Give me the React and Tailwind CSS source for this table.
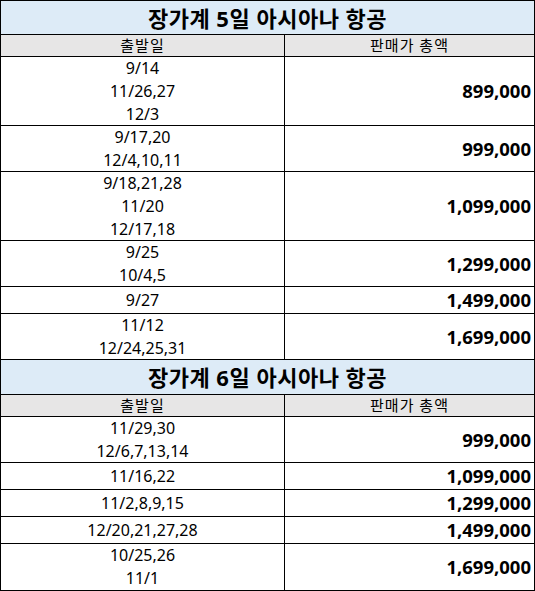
import React from 'react';

const sections = [
  {
    title: '장가계 5일 아시아나 항공',
    rows: [
      { h: 'h-[69px]', dates: ['9/14', '11/26,27', '12/3'], price: '899,000' },
      { h: 'h-[46px]', dates: ['9/17,20', '12/4,10,11'], price: '999,000' },
      { h: 'h-[69px]', dates: ['9/18,21,28', '11/20', '12/17,18'], price: '1,099,000' },
      { h: 'h-[46px]', dates: ['9/25', '10/4,5'], price: '1,299,000' },
      { h: 'h-[27px]', dates: ['9/27'], price: '1,499,000' },
      { h: 'h-[46px]', dates: ['11/12', '12/24,25,31'], price: '1,699,000' },
    ],
  },
  {
    title: '장가계 6일 아시아나 항공',
    rows: [
      { h: 'h-[46px]', dates: ['11/29,30', '12/6,7,13,14'], price: '999,000' },
      { h: 'h-[27px]', dates: ['11/16,22'], price: '1,099,000' },
      { h: 'h-[27px]', dates: ['11/2,8,9,15'], price: '1,299,000' },
      { h: 'h-[27px]', dates: ['12/20,21,27,28'], price: '1,499,000' },
      { h: 'h-[46px]', dates: ['10/25,26', '11/1'], price: '1,699,000' },
    ],
  },
];

export default function App() {
  return (
    <div className="w-[535px] h-[591px] bg-white font-['Noto_Sans','Noto_Sans_CJK_KR',sans-serif] text-black">
      <div className="border border-black">
        {sections.map((s, si) => (
          <div key={si}>
            {/* title row */}
            <div className={`${si === 0 ? 'h-[34px]' : 'h-[35px]'} bg-[#ddebf7] border-b border-black flex items-center justify-center`}>
              <span className="text-[22px] font-bold leading-none tracking-[0.5px]">{s.title}</span>
            </div>
            {/* header */}
            <div className="h-[22px] bg-[#e7e6e6] border-b border-black flex text-[15px] tracking-[1px]">
              <div className="w-[284px] border-r border-black flex items-center justify-center">출발일</div>
              <div className="flex-1 flex items-center justify-center">판매가 총액</div>
            </div>
            {s.rows.map((r, ri) => (
              <div
                key={ri}
                className={`${r.h} flex ${si === 1 && ri === s.rows.length - 1 ? '' : 'border-b border-black'}`}
              >
                <div className="w-[284px] border-r border-black flex flex-col items-center justify-center text-[16px] leading-[23px]">
                  {r.dates.map((d, di) => (
                    <span key={di}>{d}</span>
                  ))}
                </div>
                <div className="flex-1 flex items-center justify-end pr-[3px] text-[18.5px] font-bold">
                  {r.price}
                </div>
              </div>
            ))}
          </div>
        ))}
      </div>
    </div>
  );
}
